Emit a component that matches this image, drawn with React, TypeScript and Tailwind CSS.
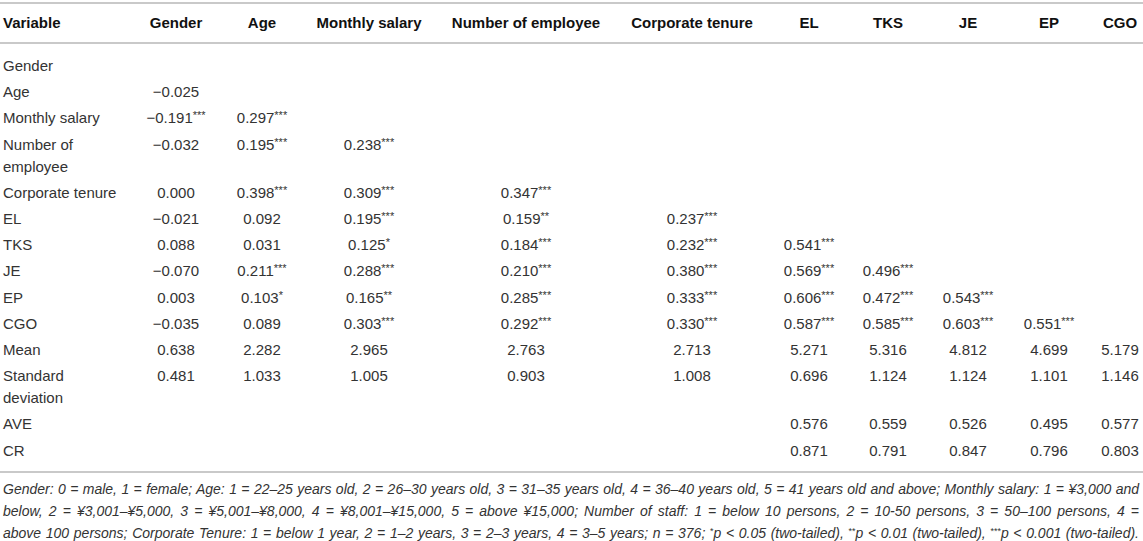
import React from "react";

const headers = [
  "Variable",
  "Gender",
  "Age",
  "Monthly salary",
  "Number of employee",
  "Corporate tenure",
  "EL",
  "TKS",
  "JE",
  "EP",
  "CGO",
];

const colWidths = [
  "w-[121px]",
  "w-[110px]",
  "w-[62px]",
  "w-[152px]",
  "w-[162px]",
  "w-[170px]",
  "w-[64px]",
  "w-[94px]",
  "w-[66px]",
  "w-[96px]",
  "w-[46px]",
];

const rows: { label: React.ReactNode; values: string[] }[] = [
  { label: "Gender", values: [] },
  { label: "Age", values: ["−0.025"] },
  { label: "Monthly salary", values: ["−0.191***", "0.297***"] },
  {
    label: (
      <>
        Number of
        <br />
        employee
      </>
    ),
    values: ["−0.032", "0.195***", "0.238***"],
  },
  { label: "Corporate tenure", values: ["0.000", "0.398***", "0.309***", "0.347***"] },
  { label: "EL", values: ["−0.021", "0.092", "0.195***", "0.159**", "0.237***"] },
  { label: "TKS", values: ["0.088", "0.031", "0.125*", "0.184***", "0.232***", "0.541***"] },
  {
    label: "JE",
    values: ["−0.070", "0.211***", "0.288***", "0.210***", "0.380***", "0.569***", "0.496***"],
  },
  {
    label: "EP",
    values: ["0.003", "0.103*", "0.165**", "0.285***", "0.333***", "0.606***", "0.472***", "0.543***"],
  },
  {
    label: "CGO",
    values: [
      "−0.035",
      "0.089",
      "0.303***",
      "0.292***",
      "0.330***",
      "0.587***",
      "0.585***",
      "0.603***",
      "0.551***",
    ],
  },
  {
    label: "Mean",
    values: ["0.638", "2.282", "2.965", "2.763", "2.713", "5.271", "5.316", "4.812", "4.699", "5.179"],
  },
  {
    label: (
      <>
        Standard
        <br />
        deviation
      </>
    ),
    values: ["0.481", "1.033", "1.005", "0.903", "1.008", "0.696", "1.124", "1.124", "1.101", "1.146"],
  },
  { label: "AVE", values: ["", "", "", "", "", "0.576", "0.559", "0.526", "0.495", "0.577"] },
  { label: "CR", values: ["", "", "", "", "", "0.871", "0.791", "0.847", "0.796", "0.803"] },
];

function Val({ v }: { v: string }) {
  const m = v.match(/^([^*]*)(\**)$/);
  const num = m ? m[1] : v;
  const stars = m ? m[2] : "";
  return (
    <span className="whitespace-nowrap">
      {num}
      {stars && (
        <span className="relative -top-[4px] text-[11px] leading-none">{stars}</span>
      )}
    </span>
  );
}

function Star({ s }: { s: string }) {
  return <span className="relative -top-[4px] text-[9px] leading-none not-italic">{s}</span>;
}

export default function App() {
  return (
    <div className="w-[1143px] bg-white font-['Liberation_Sans',Arial,sans-serif] text-[15px] text-[#333]">
      <table className="mt-[2px] w-full table-fixed border-collapse">
        <colgroup>
          {colWidths.map((w, i) => (
            <col key={i} className={w} />
          ))}
        </colgroup>
        <thead>
          <tr className="border-y-2 border-[#c9c9c9]">
            {headers.map((h, i) => (
              <th
                key={h}
                className={`py-[8px] text-[15px] font-bold leading-[22px] text-[#111] whitespace-nowrap ${
                  i === 0 ? "pl-[3px] text-left" : "text-center"
                }`}
              >
                {h}
              </th>
            ))}
          </tr>
        </thead>
        <tbody>
          <tr className="h-[10px]">
            <td colSpan={11} />
          </tr>
          {rows.map((r, ri) => (
            <tr key={ri}>
              <td className="pl-[3px] py-[2.1px] align-top leading-[22px]">{r.label}</td>
              {Array.from({ length: 10 }).map((_, ci) => (
                <td key={ci} className="py-[2.1px] text-center align-top leading-[22px]">
                  {r.values[ci] ? <Val v={r.values[ci]} /> : null}
                </td>
              ))}
            </tr>
          ))}
          <tr className="h-[8px] border-b-2 border-[#c9c9c9]">
            <td colSpan={11} />
          </tr>
        </tbody>
      </table>
      <div className="pt-[5px] pl-[3px] pr-[4px] text-[14px] italic leading-[22px] text-[#333]">
        <div className="text-justify [text-align-last:justify] whitespace-nowrap">
          Gender: 0 = male, 1 = female; Age: 1 = 22–25 years old, 2 = 26–30 years old, 3 = 31–35 years old, 4 = 36–40 years old, 5 = 41 years old and above; Monthly salary: 1 = ¥3,000 and
        </div>
        <div className="text-justify [text-align-last:justify] whitespace-nowrap">
          below, 2 = ¥3,001–¥5,000, 3 = ¥5,001–¥8,000, 4 = ¥8,001–¥15,000, 5 = above ¥15,000; Number of staff: 1 = below 10 persons, 2 = 10-50 persons, 3 = 50–100 persons, 4 =
        </div>
        <div className="text-justify [text-align-last:justify] whitespace-nowrap">
          above 100 persons; Corporate Tenure: 1 = below 1 year, 2 = 1–2 years, 3 = 2–3 years, 4 = 3–5 years; n = 376; <Star s="*" />p &lt; 0.05 (two-tailed), <Star s="**" />p &lt; 0.01 (two-tailed), <Star s="***" />p &lt; 0.001 (two-tailed).
        </div>
      </div>
    </div>
  );
}
